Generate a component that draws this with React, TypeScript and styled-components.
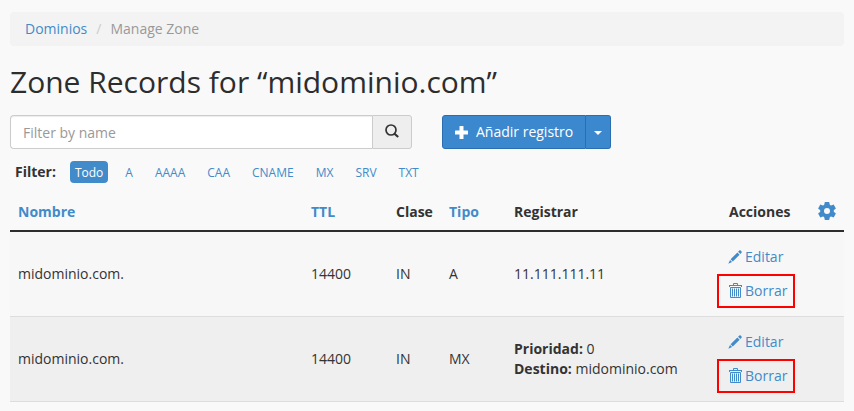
import React from "react";
import styled, { createGlobalStyle } from "styled-components";

const BLUE = "#428bca";
const TEXT = "#333";

const GlobalStyle = createGlobalStyle`
  *, *::before, *::after { box-sizing: border-box; }
  body {
    margin: 0;
    background: #f9f9f9;
    color: ${TEXT};
    font: 14px/20px "Open Sans", "Noto Sans", sans-serif;
  }
  button, input { font: inherit; }
  svg { flex: none; }
`;

const Page = styled.main`
  padding: 12px 10px 0;
`;

const Breadcrumb = styled.ol`
  display: flex;
  margin: 0 0 20px;
  padding: 7px 15px;
  list-style: none;
  background: #f3f3f3;
  border-radius: 4px;
`;

const Crumb = styled.li`
  color: #999;

  & + &::before {
    content: "/";
    padding: 0 9px;
    color: #ccc;
  }
`;

const Link = styled.a`
  color: ${BLUE};
  text-decoration: none;
`;

const Title = styled.h1`
  margin: 0 0 18px;
  color: #2d2d2d;
  font-size: 30px;
  font-weight: 400;
  line-height: 31px;
`;

const Toolbar = styled.div`
  display: flex;
  gap: 30px;
  margin-bottom: 12px;
`;

const SearchGroup = styled.form`
  display: flex;
  width: 402px;
`;

const SearchInput = styled.input`
  flex: 1;
  min-width: 0;
  height: 34px;
  padding: 6px 12px;
  background: #fff;
  color: #555;
  border: 1px solid #ccc;
  border-right: 0;
  border-radius: 4px 0 0 4px;
  box-shadow: inset 0 1px 1px rgba(0, 0, 0, 0.075);

  &::placeholder {
    color: #999;
    opacity: 1;
  }
`;

const SearchButton = styled.button`
  display: flex;
  align-items: center;
  justify-content: center;
  width: 40px;
  padding: 0 0 2px;
  background: #eee;
  color: ${TEXT};
  border: 1px solid #ccc;
  border-radius: 0 3px 3px 0;
`;

const SplitButton = styled.div`
  display: flex;
`;

const PrimaryButton = styled.button`
  display: flex;
  align-items: center;
  gap: 8px;
  height: 34px;
  padding: 0 12px;
  background: #3b88ce;
  color: #fff;
  border: 1px solid #2a6eb0;
  border-radius: 3px 0 0 3px;
`;

const ToggleButton = styled(PrimaryButton)`
  padding: 2px 8px 0;
  border-left: 0;
  border-radius: 0 3px 3px 0;
`;

const FilterBar = styled.div`
  display: flex;
  align-items: center;
  padding-left: 5px;
`;

const FilterLabel = styled.span`
  margin-right: 14px;
  font-weight: 700;
`;

const FilterList = styled.div`
  display: flex;
  gap: 12px;
`;

const FilterButton = styled.button<{ $active?: boolean }>`
  padding: 3px 5px 1px;
  background: ${(p) => (p.$active ? BLUE : "transparent")};
  color: ${(p) => (p.$active ? "#fff" : BLUE)};
  border: 0;
  border-radius: 4px;
  font-size: 12px;
  line-height: 18px;
`;

const RecordTable = styled.table`
  width: 100%;
  margin-top: 9px;
  border-collapse: separate;
  border-spacing: 0;
  table-layout: fixed;
`;

const Column = styled.col<{ $width?: number }>`
  width: ${(p) => (p.$width ? `${p.$width}px` : "auto")};
`;

const HeadCell = styled.th`
  padding: 10px 8px 8px;
  border-bottom: 2px solid #2d2d2d;
  text-align: left;
  font-weight: 700;
`;

const ActionsHead = styled.div`
  display: flex;
  align-items: flex-start;
  justify-content: space-between;
  padding-left: 12px;
`;

const IconButton = styled.button`
  display: flex;
  padding: 0;
  background: none;
  color: ${BLUE};
  border: 0;
`;

const Row = styled.tr`
  background: #f7f7f7;

  &:nth-child(even) {
    background: #efefef;
  }
`;

const Cell = styled.td`
  padding: 8px;
  border-bottom: 1px solid #ddd;
  vertical-align: middle;
`;

const ActionList = styled.div`
  display: flex;
  flex-direction: column;
  align-items: flex-start;
`;

const ActionButton = styled.button<{ $marked?: boolean }>`
  display: flex;
  align-items: center;
  gap: 3px;
  width: 78px;
  height: 34px;
  padding: 0 0 0 9px;
  background: none;
  color: ${BLUE};
  border: 2px solid ${(p) => (p.$marked ? "#f00" : "transparent")};
`;

const PencilIcon = () => (
  <svg width="14" height="14" viewBox="0 0 14 14" fill="currentColor" aria-hidden="true">
    <path d="M11.300.6a1 1 0 0 1 1.400 0l.8.8a1 1 0 0 1 0 1.400l-1.200 1.200-2.200-2.200zM9.400 2.500l2.200 2.200-6.800 6.800-2.200-2.200zM2 10l2.100 2.100L.3 13.700z" />
  </svg>
);

const TrashIcon = () => (
  <svg width="14" height="16" viewBox="0 0 14 16" fill="none" stroke="currentColor" aria-hidden="true">
    <path d="M5.500 2V.5h4V2M1 2.500h13M1.500 2v2M13.500 2v2" />
    <path d="M2.500 4.500h10v10h-10zM4.500 5.500v8M6.500 5.500v8M8.500 5.500v8M10.500 5.500v8" />
  </svg>
);

const SearchIcon = () => (
  <svg width="14" height="14" viewBox="0 0 14 14" fill="none" stroke="currentColor" aria-hidden="true">
    <circle cx="6" cy="6" r="5" strokeWidth="1.700" />
    <path d="M9.500 9.700l3.700 3.300" strokeWidth="2.200" />
  </svg>
);

const PlusIcon = () => (
  <svg width="13" height="13" viewBox="0 0 13 13" fill="currentColor" aria-hidden="true">
    <path d="M5 0h3a.5.5 0 0 1 .5.5v4h4a.5.5 0 0 1 .5.5v3a.5.5 0 0 1-.5.5h-4v4a.5.5 0 0 1-.5.5H5a.5.5 0 0 1-.5-.5v-4h-4A.5.5 0 0 1 0 8V5a.5.5 0 0 1 .5-.5h4v-4A.5.5 0 0 1 5 0z" />
  </svg>
);

const CaretIcon = () => (
  <svg width="8" height="4" viewBox="0 0 8 4" fill="currentColor" aria-hidden="true">
    <path d="M0 0h8L4 4z" />
  </svg>
);

const GearIcon = () => (
  <svg width="18" height="18" viewBox="0 0 18 18" aria-hidden="true">
    <g fill="currentColor">
      {[0, 60, 120].map((angle) => (
        <path key={angle} d="M6.800 0h4.400l.8 4v10l-.8 4H6.800L6 14V4z" transform={`rotate(${angle} 9 9)`} />
      ))}
      <circle cx="9" cy="9" r="6.800" />
    </g>
    <circle cx="9" cy="9" r="3" fill="#f9f9f9" />
  </svg>
);

const filters = ["Todo", "A", "AAAA", "CAA", "CNAME", "MX", "SRV", "TXT"];

const records = [
  { name: "midominio.com.", ttl: 14400, cls: "IN", type: "A", value: "11.111.111.11" },
  {
    name: "midominio.com.",
    ttl: 14400,
    cls: "IN",
    type: "MX",
    value: (
      <>
        <strong>Prioridad:</strong> 0
        <br />
        <strong>Destino:</strong> midominio.com
      </>
    ),
  },
];

export default function App() {
  return (
    <Page>
      <GlobalStyle />
      <nav aria-label="Breadcrumb">
        <Breadcrumb>
          <Crumb>
            <Link href="#dominios">Dominios</Link>
          </Crumb>
          <Crumb aria-current="page">Manage Zone</Crumb>
        </Breadcrumb>
      </nav>

      <Title>Zone Records for “midominio.com”</Title>

      <Toolbar>
        <SearchGroup onSubmit={(e) => e.preventDefault()}>
          <SearchInput type="text" placeholder="Filter by name" aria-label="Filter by name" />
          <SearchButton type="submit" aria-label="Search">
            <SearchIcon />
          </SearchButton>
        </SearchGroup>
        <SplitButton>
          <PrimaryButton type="button">
            <PlusIcon />
            Añadir registro
          </PrimaryButton>
          <ToggleButton type="button" aria-label="Más opciones">
            <CaretIcon />
          </ToggleButton>
        </SplitButton>
      </Toolbar>

      <FilterBar>
        <FilterLabel id="filter-label">Filter:</FilterLabel>
        <FilterList role="group" aria-labelledby="filter-label">
          {filters.map((f, i) => (
            <FilterButton key={f} type="button" $active={i === 0} aria-pressed={i === 0}>
              {f}
            </FilterButton>
          ))}
        </FilterList>
      </FilterBar>

      <RecordTable>
        <colgroup>
          <Column />
          <Column $width={85} />
          <Column $width={53} />
          <Column $width={65} />
          <Column $width={203} />
          <Column $width={135} />
        </colgroup>
        <thead>
          <tr>
            <HeadCell>
              <Link href="#nombre">Nombre</Link>
            </HeadCell>
            <HeadCell>
              <Link href="#ttl">TTL</Link>
            </HeadCell>
            <HeadCell>Clase</HeadCell>
            <HeadCell>
              <Link href="#tipo">Tipo</Link>
            </HeadCell>
            <HeadCell>Registrar</HeadCell>
            <HeadCell>
              <ActionsHead>
                Acciones
                <IconButton type="button" aria-label="Configuración">
                  <GearIcon />
                </IconButton>
              </ActionsHead>
            </HeadCell>
          </tr>
        </thead>
        <tbody>
          {records.map((r) => (
            <Row key={r.type}>
              <Cell>{r.name}</Cell>
              <Cell>{r.ttl}</Cell>
              <Cell>{r.cls}</Cell>
              <Cell>{r.type}</Cell>
              <Cell>{r.value}</Cell>
              <Cell>
                <ActionList>
                  <ActionButton type="button">
                    <PencilIcon />
                    Editar
                  </ActionButton>
                  <ActionButton type="button" $marked>
                    <TrashIcon />
                    Borrar
                  </ActionButton>
                </ActionList>
              </Cell>
            </Row>
          ))}
        </tbody>
      </RecordTable>
    </Page>
  );
}
